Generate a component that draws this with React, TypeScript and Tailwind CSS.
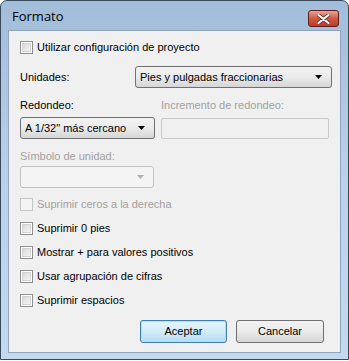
import React from 'react';

const font = { fontFamily: '"Liberation Sans", Arial, sans-serif' };

const Check: React.FC<{ label: string; disabled?: boolean }> = ({ label, disabled }) => (
    <div className="flex items-center h-[13px]">
        <div
            className={`w-[13px] h-[13px] border flex items-center justify-center ${disabled
                ? 'border-[#c5c5c5] bg-[#f4f4f4]'
                : 'border-[#8e8f8f] bg-white'
                }`}
        >
            {!disabled && (
                <div className="w-[9px] h-[9px] border border-[#d3d3d3] bg-gradient-to-br from-[#d9d9d9] to-[#f6f6f6]" />
            )}
        </div>
        <span className={`ml-[4px] text-[11px] leading-[13px] ${disabled ? 'text-[#a0a0a0]' : 'text-black'}`}>
            {label}
        </span>
    </div>
);

const Arrow: React.FC<{ grey?: boolean }> = ({ grey }) => (
    <svg width="8" height="5" viewBox="0 0 8 5" className="shrink-0">
        <path d="M0 0 H7 L3.5 4 Z" fill={grey ? '#b0b0b0' : '#000'} />
    </svg>
);

const Combo: React.FC<{ text?: string; className: string; disabled?: boolean }> = ({ text, className, disabled }) => (
    <div
        className={`h-[22px] rounded-[3px] border flex items-center justify-between pl-[4px] pr-[8px] text-[11px] ${disabled
            ? 'border-[#c2c2c2] bg-[#f4f4f4]'
            : 'border-[#707070] bg-gradient-to-b from-[#f2f2f2] via-[#ebebeb] to-[#d6d6d6]'
            } ${className}`}
    >
        <span className="text-black">{text}</span>
        <Arrow grey={disabled} />
    </div>
);

const App: React.FC = () => {
    return (
        <div style={font} className="w-[349px] h-[361px] overflow-hidden bg-white">
            <div className="w-[349px] h-[360px] rounded-t-[7px] border border-[#394a5c] bg-gradient-to-b from-[#a2bdd9] via-[#bad1ea] to-[#c3d9f0] flex flex-col">
                {/* Title bar */}
                <div className="h-[29px] flex items-start justify-between pl-[11px] pr-[9px]">
                    <span className="mt-[6px] text-[13px] text-black" style={{ fontFamily: '"Open Sans", "Liberation Sans", sans-serif' }}>
                        Formato
                    </span>
                    <div className="mt-[9px] w-[31px] h-[17px] rounded-[3px] border border-[#5c1f1f] bg-gradient-to-b from-[#e8a493] via-[#cf5a43] to-[#c0392b] flex items-center justify-center">
                        <svg width="13" height="10" viewBox="0 0 13 10">
                            <path d="M1.5 1 L11.5 9 M11.5 1 L1.5 9" stroke="#5a2a22" strokeWidth="3.6" strokeLinecap="round" />
                            <path d="M1.5 1 L11.5 9 M11.5 1 L1.5 9" stroke="#fff" strokeWidth="2.2" strokeLinecap="round" />
                        </svg>
                    </div>
                </div>

                {/* Content */}
                <div className="mx-[7px] h-[323px] bg-[#f0f0f0] border border-[#8ea4bd] pl-[11px] pt-[10px] flex flex-col">
                    <Check label="Utilizar configuración de proyecto" />

                    <div className="mt-[12px] flex items-center">
                        <span className="w-[115px] text-[11px] text-black">Unidades:</span>
                        <Combo text="Pies y pulgadas fraccionarias" className="w-[197px]" />
                    </div>

                    <div className="mt-[10px] flex h-[14px] items-center text-[11px]">
                        <span className="w-[141px] text-black">Redondeo:</span>
                        <span className="text-[#a0a0a0]">Incremento de redondeo:</span>
                    </div>

                    <div className="mt-[5px] flex items-center">
                        <Combo text={'A 1/32" más cercano'} className="w-[135px] mr-[6px]" />
                        <div className="w-[168px] h-[21px] border border-[#c9c9c9] rounded-[2px] bg-[#f0f0f0]" />
                    </div>

                    <div className="mt-[10px] h-[14px] flex items-center text-[11px] text-[#a0a0a0]">Símbolo de unidad:</div>

                    <Combo disabled className="mt-[3px] w-[134px]" />

                    <div className="mt-[10px] flex flex-col gap-[11px]">
                        <Check label="Suprimir ceros a la derecha" disabled />
                        <Check label="Suprimir 0 pies" />
                        <Check label="Mostrar + para valores positivos" />
                        <Check label="Usar agrupación de cifras" />
                        <Check label="Suprimir espacios" />
                    </div>

                    <div className="mt-[13px] flex justify-end pr-[16px] gap-[9px] text-[11px]">
                        <button className="w-[87px] h-[23px] rounded-[3px] border border-[#3c7fb1] bg-gradient-to-b from-[#e5f4fc] via-[#d3ecf9] to-[#b3dcf3] shadow-[inset_0_0_0_1px_#a8e2fb] text-black">
                            Aceptar
                        </button>
                        <button className="w-[88px] h-[23px] rounded-[3px] border border-[#707070] bg-gradient-to-b from-[#f2f2f2] via-[#ebebeb] to-[#d6d6d6] text-black">
                            Cancelar
                        </button>
                    </div>
                </div>
            </div>
        </div>
    );
};

export default App;
